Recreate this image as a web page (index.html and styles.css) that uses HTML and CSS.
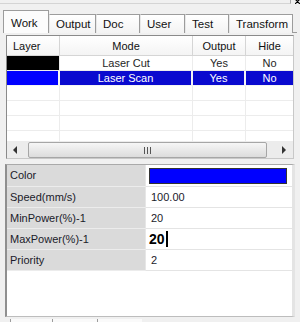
FILE: index.html
```html
<!DOCTYPE html>
<html>
<head>
<meta charset="utf-8">
<link rel="stylesheet" href="styles.css">
</head>
<body>
<div class="top"><div class="topbox"></div><svg class="topx" width="5" height="5" viewBox="0 0 5 5"><path d="M0 0 L5 5 M5 0 L0 5" stroke="#000" stroke-width="1.2"/></svg></div>
<div class="tabs">
  <div class="tab sel">Work</div>
  <div class="tab">Output</div>
  <div class="tab">Doc</div>
  <div class="tab">User</div>
  <div class="tab">Test</div>
  <div class="tab">Transform</div>
</div>
<div class="panel">
  <div class="grid">
    <div class="ghead">
      <div class="c c1 left">Layer</div>
      <div class="c c2">Mode</div>
      <div class="c c3">Output</div>
      <div class="c c4">Hide</div>
    </div>
    <div class="gbody">
      <div class="row">
        <div class="c c1 black"></div>
        <div class="c c2">Laser Cut</div>
        <div class="c c3">Yes</div>
        <div class="c c4">No</div>
      </div>
      <div class="row selrow">
        <div class="c c1 blue"></div>
        <div class="c c2">Laser Scan</div>
        <div class="c c3">Yes</div>
        <div class="c c4">No</div>
      </div>
      <div class="row"><div class="c c1"></div><div class="c c2"></div><div class="c c3"></div><div class="c c4"></div></div>
      <div class="row"><div class="c c1"></div><div class="c c2"></div><div class="c c3"></div><div class="c c4"></div></div>
      <div class="row"><div class="c c1"></div><div class="c c2"></div><div class="c c3"></div><div class="c c4"></div></div>
      <div class="row"><div class="c c1"></div><div class="c c2"></div><div class="c c3"></div><div class="c c4"></div></div>
    </div>
    <div class="hscroll">
      <div class="arrow"><svg width="5" height="8" viewBox="0 0 5 8"><path d="M4 0 L0 4 L4 8 Z" fill="#333"/></svg></div>
      <div class="thumb"><span class="grip"><i></i><i></i><i></i></span></div>
      <div class="arrow"><svg width="5" height="8" viewBox="0 0 5 8"><path d="M0 0 L4 4 L0 8 Z" fill="#333"/></svg></div>
    </div>
  </div>
  <div class="props">
    <div class="prow"><div class="plabel">Color</div><div class="pval"><div class="swatch"></div></div></div>
    <div class="prow"><div class="plabel">Speed(mm/s)</div><div class="pval">100.00</div></div>
    <div class="prow"><div class="plabel">MinPower(%)-1</div><div class="pval">20</div></div>
    <div class="prow"><div class="plabel">MaxPower(%)-1</div><div class="pval edit">20<span class="caret"></span></div></div>
    <div class="prow"><div class="plabel">Priority</div><div class="pval">2</div></div>
    <div class="pempty"></div>
  </div>
  <div class="btabs"><div class="btab"></div><div class="btab"></div><div class="btab"></div></div>
</div>
</body>
</html>
```

FILE: styles.css
```css
html, body {
  margin: 0;
  padding: 0;
}
body {
  width: 300px;
  height: 322px;
  overflow: hidden;
  background: #f0f0f0;
  font-family: "Liberation Sans", Arial, sans-serif;
  font-size: 11px;
  color: #1e1e1e;
}
.top {
  display: flex;
  height: 4px;
}
.topbox {
  flex: 1;
  border-bottom: 1px solid #d4d4d4;
  border-right: 1px solid #a8a8a8;
  margin-right: 4px;
}
.topx {
  display: block;
  margin-top: -1px;
}
.tabs {
  display: flex;
  align-items: flex-end;
  height: 23px;
  margin-top: 6px;
  padding-left: 3px;
  position: relative;
  z-index: 1;
  margin-bottom: -1px;
}
.tab {
  box-sizing: border-box;
  min-width: 44px;
  height: 19px;
  padding: 0 6px;
  line-height: 18px;
  font-size: 11.5px;
  border: 1px solid #9c9c9c;
  border-bottom: none;
  border-left-color: #e8e8e8;
  background: linear-gradient(#ffffff, #f3f3f3);
  color: #111;
}
.tab.sel {
  width: 46px;
  height: 23px;
  line-height: 25px;
  padding-left: 7px;
  background: #fcfcfc;
  border-left: 1px solid #9c9c9c;
  border-right: 1px solid #9c9c9c;
}
.tab:nth-child(2) { width: 47px; }
.tab:nth-child(3) { width: 44px; }
.tab:nth-child(4) { width: 45px; }
.tab:nth-child(5) { width: 44px; }
.tab:nth-child(6) { width: 64px; }
.panel {
  margin-left: 3px;
  width: 294px;
  box-sizing: border-box;
  border-top: 1px solid #9c9c9c;
  padding: 2px 0 0 3px;
  background: #f0f0f0;
}
.grid {
  width: 288px;
  box-sizing: border-box;
  border: 1px solid #8a8a8a;
  border-right-color: #c8c8c8;
  border-bottom-color: #c8c8c8;
  background: #fff;
}
.ghead {
  display: flex;
  height: 20px;
  box-sizing: border-box;
  border-bottom: 1px solid #d5d5d5;
  background: linear-gradient(#ffffff, #f4f4f4);
}
.ghead .c {
  line-height: 20px;
  border-right: 1px solid #d5d5d5;
  color: #111;
}
.c {
  box-sizing: border-box;
  text-align: center;
  border-right: 1px solid #ececec;
  overflow: hidden;
  white-space: nowrap;
}
.c.left {
  text-align: left;
  padding-left: 6px;
}
.c1 { width: 53px; }
.c2 { width: 133px; }
.c3 { width: 53px; }
.c4 { width: 47px; border-right: none; }
.ghead .c4 { border-right: none; }
.gbody {
  height: 85px;
  overflow: hidden;
}
.row {
  display: flex;
  height: 15px;
  box-sizing: border-box;
  border-bottom: 1px solid #ececec;
  line-height: 14px;
}
.row .c.black {
  background: #000;
}
.selrow {
  border-bottom-color: #f4f4f4;
}
.selrow .c {
  background: #0a0acf;
  color: #fff;
  border-right: 2px solid #f4f4f4;
}
.selrow .c4 { border-right: none; }
.selrow .c.blue {
  background: #0000ff;
}
.hscroll {
  display: flex;
  height: 17px;
  align-items: stretch;
  background: #ececec;
}
.arrow {
  width: 17px;
  display: flex;
  align-items: center;
  justify-content: center;
}
.thumb {
  flex: 1;
  margin: 1px 9px 0 4px;
  border: 1px solid #a6a6a6;
  border-radius: 2px;
  background: linear-gradient(#f6f6f6, #dcdcdc);
  display: flex;
  align-items: center;
  justify-content: center;
}
.grip {
  display: flex;
  gap: 2px;
}
.grip i {
  display: block;
  width: 1px;
  height: 7px;
  background: #555;
}
.props {
  margin-top: 5px;
  width: 290px;
  margin-left: -1px;
  box-sizing: border-box;
  border-top: 1px solid #a9a9a9;
  border-left: 2px solid #8f8f8f;
  border-right: 3px solid #e4e4e4;
  border-bottom: 1px solid #bdbdbd;
  background: #fff;
}
.prow {
  display: flex;
  height: 21px;
  box-sizing: border-box;
}
.plabel {
  width: 139px;
  box-sizing: border-box;
  padding-left: 3px;
  background: #dadada;
  border-bottom: 1px solid #ececec;
  border-right: 1px solid #e6e6e6;
  line-height: 20px;
  color: #1a1a2a;
}
.pval {
  flex: 1;
  box-sizing: border-box;
  padding-left: 5px;
  border-bottom: 1px solid #e4e4e4;
  line-height: 20px;
  color: #1a1a2a;
  display: flex;
  align-items: center;
}
.prow:first-child {
  height: 22px;
}
.prow:first-child .plabel,
.prow:first-child .pval {
  line-height: 21px;
}
.swatch {
  width: 138px;
  height: 16px;
  box-sizing: border-box;
  margin-left: -2px;
  margin-top: 1px;
  background: #0000ff;
  border: 1px solid #333;
}
.pval.edit {
  font-weight: bold;
  font-size: 14px;
  color: #000;
  padding-left: 3px;
}
.caret {
  display: inline-block;
  width: 2px;
  height: 16px;
  margin-left: 1px;
  background: #000;
}
.pempty {
  height: 45px;
}
.btabs {
  display: flex;
  margin-top: 2px;
  margin-left: 4px;
  height: 8px;
}
.btab {
  width: 45px;
  box-sizing: border-box;
  border-left: 1px solid #9c9c9c;
  background: #fafafa;
}
.btab:first-child {
  width: 42px;
}
```
